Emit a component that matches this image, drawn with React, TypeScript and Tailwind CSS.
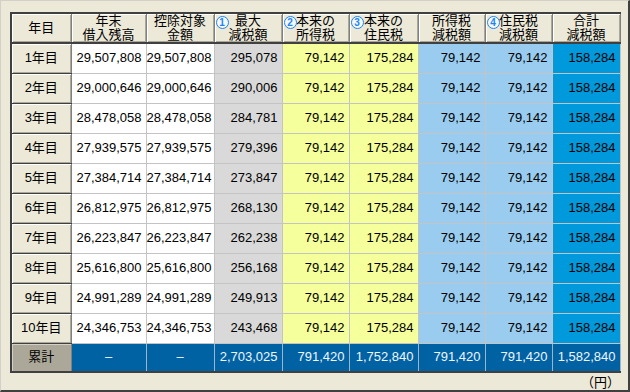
import React from 'react'

const rows = [
  ['29,507,808', '29,507,808', '295,078'],
  ['29,000,646', '29,000,646', '290,006'],
  ['28,478,058', '28,478,058', '284,781'],
  ['27,939,575', '27,939,575', '279,396'],
  ['27,384,714', '27,384,714', '273,847'],
  ['26,812,975', '26,812,975', '268,130'],
  ['26,223,847', '26,223,847', '262,238'],
  ['25,616,800', '25,616,800', '256,168'],
  ['24,991,289', '24,991,289', '249,913'],
  ['24,346,753', '24,346,753', '243,468'],
]

const widths = [60, 75, 68, 68, 67, 69, 67, 67, 68]

const headers: { lines: string[]; badge?: string }[] = [
  { lines: ['年目'] },
  { lines: ['年末', '借入残高'] },
  { lines: ['控除対象', '金額'] },
  { lines: ['最大', '減税額'], badge: '1' },
  { lines: ['本来の', '所得税'], badge: '2' },
  { lines: ['本来の', '住民税'], badge: '3' },
  { lines: ['所得税', '減税額'] },
  { lines: ['住民税', '減税額'], badge: '4' },
  { lines: ['合計', '減税額'] },
]

const bevel = 'bg-[#ece9d8] shadow-[inset_1px_1px_0_#ffffff,inset_-1px_-1px_0_#aca899]'
const num = 'h-[30px] border border-[#c4c4c4] pr-[4px] text-right align-middle'

export default function App() {
  return (
    <div
      className="flex h-[392px] w-[630px] flex-col border-l border-t border-[#d4d0c8] border-b-2 border-r-2 border-b-[#404040] border-r-[#404040] bg-[#ece9d8] pl-[9px] pt-[11px] text-[13px] leading-[14px] text-black"
      style={{ fontFamily: '"Liberation Sans", "Noto Sans CJK JP", sans-serif' }}
    >
      <table className="w-[610px] table-fixed border-collapse border-l-2 border-t-2 border-[#404040]">
        <colgroup>
          {widths.map((w, i) => (
            <col key={i} style={{ width: w }} />
          ))}
        </colgroup>
        <thead>
          <tr>
            {headers.map((h, i) => (
              <th
                key={i}
                className={`relative h-[30px] border-b-2 border-r border-b-[#404040] border-r-[#808080] p-0 text-center align-middle font-normal ${bevel}`}
              >
                {h.badge && (
                  <span className="absolute left-[1px] top-[2px] flex h-[13px] w-[13px] items-center justify-center rounded-full border-[1.5px] border-[#1f84f0] bg-[#f4f8ff] text-[10px] font-bold leading-none text-[#1f84f0]">
                    {h.badge}
                  </span>
                )}
                {h.lines.map((l) => (
                  <div key={l}>{l}</div>
                ))}
              </th>
            ))}
          </tr>
        </thead>
        <tbody>
          {rows.map((r, i) => (
            <tr key={i}>
              <td className={`h-[30px] border-b border-r border-b-[#404040] border-r-[#808080] p-0 text-center align-middle ${bevel}`}>
                {i + 1}年目
              </td>
              <td className={`${num} bg-white`}>{r[0]}</td>
              <td className={`${num} bg-white`}>{r[1]}</td>
              <td className={`${num} bg-[#d9d9d9]`}>{r[2]}</td>
              <td className={`${num} bg-[#f5ff9c]`}>79,142</td>
              <td className={`${num} bg-[#f5ff9c]`}>175,284</td>
              <td className={`${num} bg-[#99ccef]`}>79,142</td>
              <td className={`${num} bg-[#99ccef]`}>79,142</td>
              <td className={`${num} bg-[#0099db]`}>158,284</td>
            </tr>
          ))}
          <tr className="text-[#eef6ff]">
            <td className="h-[29px] border-b-2 border-r border-b-[#404040] border-r-[#808080] bg-[#aca899] p-0 text-center align-middle text-black shadow-[inset_1px_1px_0_#d4d0c8]">
              累計
            </td>
            <td className="h-[29px] border border-b-2 border-[#9bb6cc] border-b-[#404040] bg-[#0062a2] text-center align-middle">–</td>
            <td className="h-[29px] border border-b-2 border-[#9bb6cc] border-b-[#404040] bg-[#0062a2] text-center align-middle">–</td>
            {['2,703,025', '791,420', '1,752,840', '791,420', '791,420', '1,582,840'].map((v, i) => (
              <td
                key={i}
                className="h-[29px] border border-b-2 border-[#9bb6cc] border-b-[#404040] bg-[#0062a2] pr-[4px] text-right align-middle"
              >
                {v}
              </td>
            ))}
          </tr>
        </tbody>
      </table>
      <div className="mr-[8px] mt-[3px] text-right text-[13px] leading-[14px]">（円）</div>
    </div>
  )
}
